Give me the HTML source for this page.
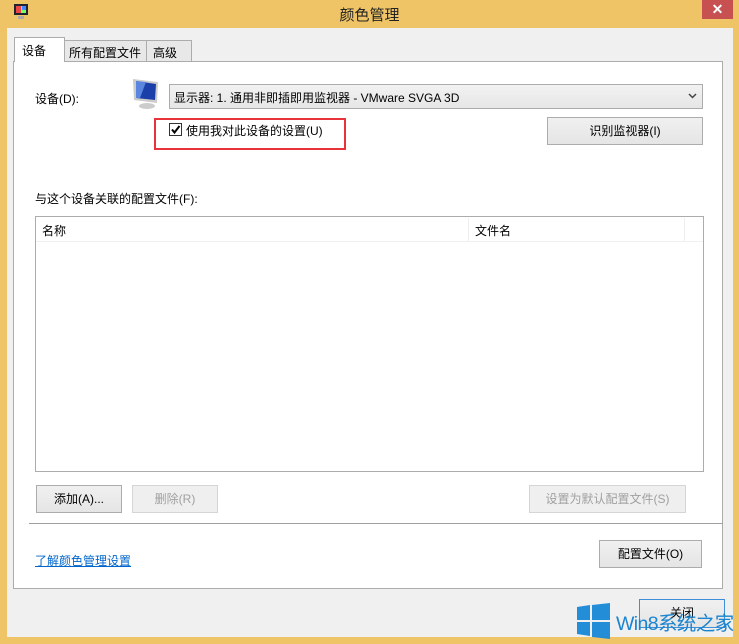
<!DOCTYPE html>
<html><head><meta charset="utf-8"><style>
*{margin:0;padding:0;box-sizing:border-box}
body{width:739px;height:644px;overflow:hidden;background:#eec467;font-family:"Liberation Sans","Noto Sans CJK SC",sans-serif;font-size:12px;color:#000;position:relative}
.a{position:absolute}
.btn{position:absolute;border:1px solid #acacac;background:linear-gradient(#f0f0f0,#e5e5e5);text-align:center;font-size:12px}
.dis{color:#a0a0a0;border-color:#d5d5d5;background:#efefef}
</style></head><body>
<div class="a" style="left:7px;top:0;width:32px;height:22px">
<svg width="20" height="20" style="position:absolute;left:6px;top:3px"><rect x="1" y="1" width="14" height="11" fill="#223" /><rect x="3" y="3" width="10" height="7" fill="#7f6"/><rect x="3" y="3" width="5" height="7" fill="#e44"/><rect x="9" y="3" width="4" height="4" fill="#48f"/><rect x="5" y="13" width="6" height="3" fill="#aaa"/></svg></div>
<div class="a" style="left:0;top:4px;width:739px;text-align:center;font-size:15px;color:#222">颜色管理</div>
<div class="a" style="left:702px;top:0;width:31px;height:19px;background:#c75050;color:#fff;text-align:center;font-size:14px;line-height:18px;font-weight:bold">✕</div>
<div class="a" style="left:7px;top:28px;width:726px;height:609px;background:#f0f0f0"></div>
<div class="a" style="left:64px;top:40px;width:83px;height:22px;border:1px solid #acacac;background:#e8e8e8;font-size:12px;padding:3px 0 0 4px">所有配置文件</div>
<div class="a" style="left:146px;top:40px;width:46px;height:22px;border:1px solid #acacac;background:#e8e8e8;font-size:12px;padding:3px 0 0 6px">高级</div>
<div class="a" style="left:13px;top:61px;width:710px;height:528px;border:1px solid #acacac;background:#fff"></div>
<div class="a" style="left:14px;top:37px;width:51px;height:25px;border:1px solid #acacac;border-bottom:none;background:#fff;padding:4px 0 0 7px">设备</div>
<div class="a" style="left:35px;top:90px">设备(D):</div>
<svg class="a" style="left:130px;top:76px" width="34" height="34"><path d="M3 3 L28 6 L27 27 L4 24 Z" fill="#ccc"/><path d="M6 5 L26 8 L25 24 L6 22 Z" fill="#1a3fa8"/><path d="M6 5 L16 6 L10 22 L6 22 Z" fill="#5a86e0"/><ellipse cx="17" cy="30" rx="8" ry="3" fill="#ccc"/></svg>
<div class="a" style="left:169px;top:84px;width:534px;height:25px;border:1px solid #acacac;background:linear-gradient(#f2f2f2,#e6e6e6);padding:4px 0 0 4px">显示器: 1. 通用非即插即用监视器 - VMware SVGA 3D
<svg style="position:absolute;right:5px;top:8px" width="9" height="6"><path d="M1 1 L4.5 4.5 L8 1" stroke="#444" stroke-width="1.5" fill="none"/></svg></div>
<div class="a" style="left:154px;top:118px;width:192px;height:32px;border:2px solid #e8333a"></div>
<div class="a" style="left:169px;top:123px;width:13px;height:13px;border:1px solid #333;background:#fff"></div>
<svg class="a" style="left:169px;top:123px" width="13" height="13"><path d="M3 6.5 L5.5 9.5 L10.5 3" stroke="#000" stroke-width="2" fill="none"/></svg>
<div class="a" style="left:186px;top:122px">使用我对此设备的设置(U)</div>
<div class="btn" style="left:547px;top:117px;width:156px;height:28px;line-height:26px">识别监视器(I)</div>
<div class="a" style="left:35px;top:190px">与这个设备关联的配置文件(F):</div>
<div class="a" style="left:35px;top:216px;width:669px;height:256px;border:1px solid #acacac;background:#fff"></div>
<div class="a" style="left:36px;top:241px;width:667px;height:1px;background:#f0f0f0"></div>
<div class="a" style="left:468px;top:218px;width:1px;height:23px;background:#eee"></div>
<div class="a" style="left:684px;top:218px;width:1px;height:23px;background:#eee"></div>
<div class="a" style="left:42px;top:222px">名称</div>
<div class="a" style="left:475px;top:222px">文件名</div>
<div class="btn" style="left:36px;top:485px;width:86px;height:28px;line-height:26px">添加(A)...</div>
<div class="btn dis" style="left:132px;top:485px;width:86px;height:28px;line-height:26px">删除(R)</div>
<div class="btn dis" style="left:529px;top:485px;width:157px;height:28px;line-height:26px">设置为默认配置文件(S)</div>
<div class="a" style="left:29px;top:523px;width:694px;height:1px;background:#a0a0a0"></div>
<div class="a" style="left:35px;top:552px;color:#0066cc;text-decoration:underline">了解颜色管理设置</div>
<div class="btn" style="left:599px;top:540px;width:103px;height:28px;line-height:26px">配置文件(O)</div>
<div class="btn" style="left:639px;top:599px;width:86px;height:29px;line-height:26px;border-color:#3c8fd8">关闭</div>
<svg class="a" style="left:576px;top:603px" width="36" height="36"><path d="M1 4 L14 2 L14 17 L1 17Z M16 2 L34 0 L34 17 L16 17Z M1 19 L14 19 L14 33 L1 31Z M16 19 L34 19 L34 36 L16 34Z" fill="#1787d6" opacity=".95"/></svg>
<div class="a" style="left:616px;top:607px;font-size:19.5px;color:#1a84cf;white-space:nowrap;letter-spacing:-0.6px">Win8系统之家</div>
</body></html>
